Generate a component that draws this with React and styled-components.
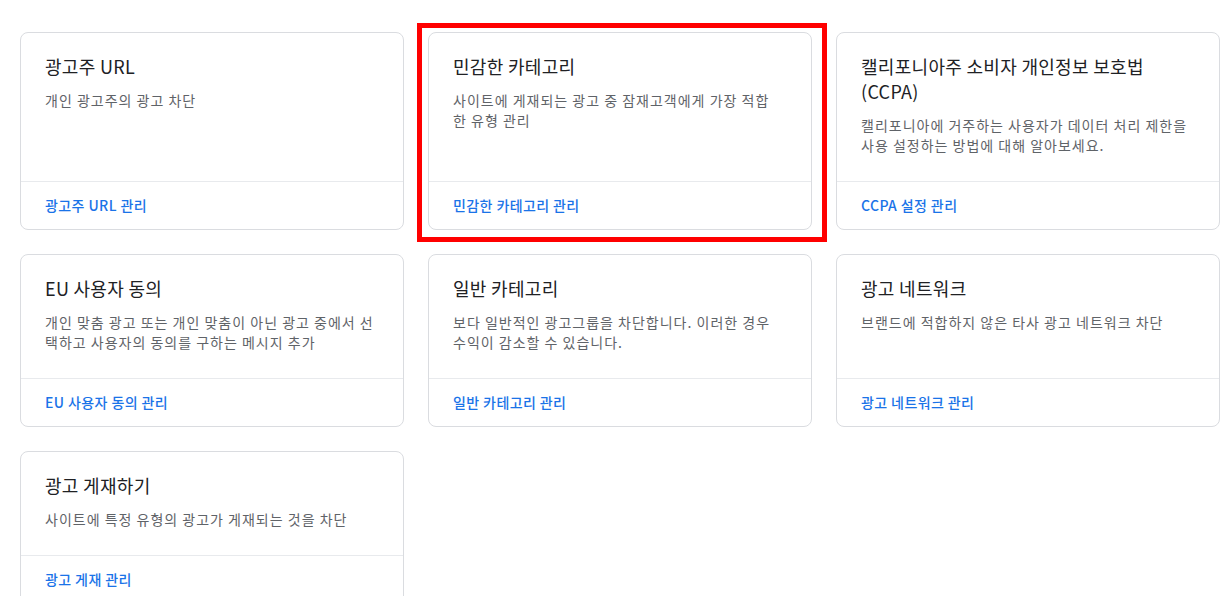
import React from 'react'
import styled, { createGlobalStyle } from 'styled-components'

const GlobalStyle = createGlobalStyle`
  body {
    margin: 0;
    background: #ffffff;
    font-family: "Noto Sans CJK KR", Roboto, "Noto Sans", sans-serif;
  }
`

const Grid = styled.div`
  display: grid;
  grid-template-columns: repeat(3, 384px);
  column-gap: 24px;
  row-gap: 24px;
  padding: 32px 1px 0 20px;
`

const Card = styled.div`
  position: relative;
  display: flex;
  flex-direction: column;
  border: 1px solid #dadce0;
  border-radius: 8px;
  background: #fff;
`

const Highlight = styled.div`
  position: absolute;
  top: -10px;
  left: -12px;
  right: -16px;
  bottom: -13px;
  border: 5px solid #ff0000;
  pointer-events: none;
`

const Body = styled.div`
  flex: 1;
  padding: 21px 29px 26px 24px;
`

const Title = styled.div`
  font-size: 18px;
  line-height: 25px;
  letter-spacing: 0.3px;
  color: #202124;
`

const Desc = styled.div`
  margin-top: 11px;
  font-size: 14px;
  line-height: 20px;
  letter-spacing: 1px;
  word-break: break-all;
  color: #5f6368;
`

const Footer = styled.div`
  border-top: 1px solid #e8eaed;
  padding: 13px 24px 14px;
`

const Link = styled.a`
  display: block;
  font-size: 14px;
  line-height: 20px;
  font-weight: 500;
  letter-spacing: 0.4px;
  color: #1a73e8;
  text-decoration: none;
  cursor: pointer;
`

const cards = [
  { title: '광고주 URL', desc: '개인 광고주의 광고 차단', link: '광고주 URL 관리' },
  { title: '민감한 카테고리', desc: '사이트에 게재되는 광고 중 잠재고객에게 가장 적합한 유형 관리', link: '민감한 카테고리 관리', selected: true },
  { title: '캘리포니아주 소비자 개인정보 보호법 (CCPA)', desc: '캘리포니아에 거주하는 사용자가 데이터 처리 제한을 사용 설정하는 방법에 대해 알아보세요.', link: 'CCPA 설정 관리' },
  { title: 'EU 사용자 동의', desc: '개인 맞춤 광고 또는 개인 맞춤이 아닌 광고 중에서 선택하고 사용자의 동의를 구하는 메시지 추가', link: 'EU 사용자 동의 관리' },
  { title: '일반 카테고리', desc: '보다 일반적인 광고그룹을 차단합니다. 이러한 경우 수익이 감소할 수 있습니다.', link: '일반 카테고리 관리' },
  { title: '광고 네트워크', desc: '브랜드에 적합하지 않은 타사 광고 네트워크 차단', link: '광고 네트워크 관리' },
  { title: '광고 게재하기', desc: '사이트에 특정 유형의 광고가 게재되는 것을 차단', link: '광고 게재 관리' },
]

export default function App() {
  return (
    <>
      <GlobalStyle />
      <Grid>
        {cards.map((c) => (
          <Card key={c.title}>
            {c.selected && <Highlight />}
            <Body>
              <Title>{c.title}</Title>
              <Desc>{c.desc}</Desc>
            </Body>
            <Footer>
              <Link>{c.link}</Link>
            </Footer>
          </Card>
        ))}
      </Grid>
    </>
  )
}
